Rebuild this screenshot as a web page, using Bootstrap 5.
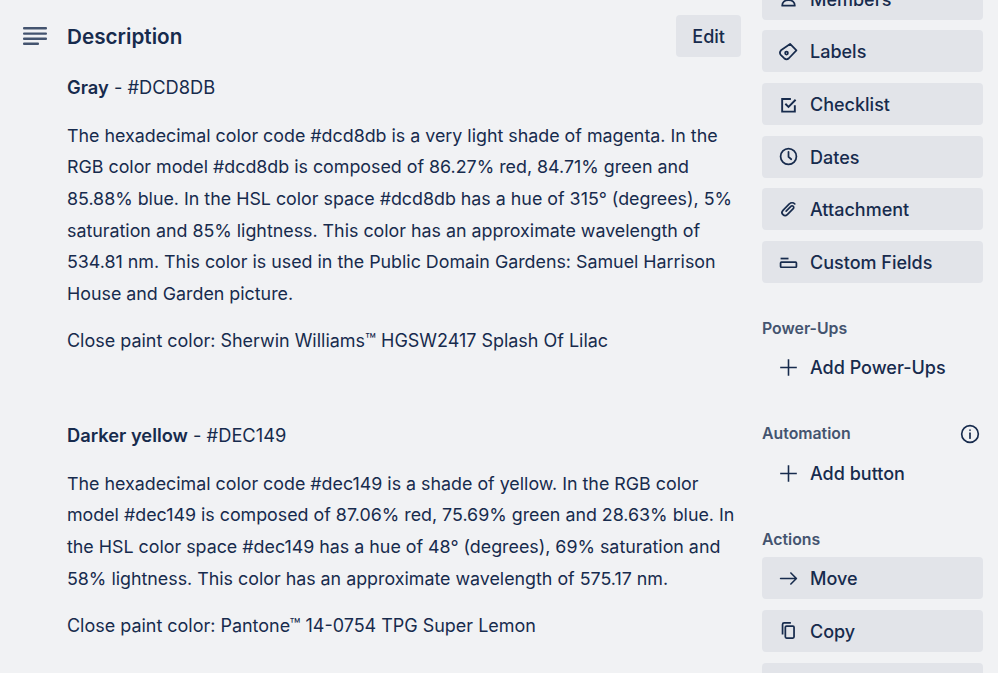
<!DOCTYPE html>
<html lang="en">
<head>
    <meta charset="UTF-8">
    <meta name="viewport" content="width=device-width, initial-scale=1.0">
    <title>Card Description</title>
    <link href="https://cdn.jsdelivr.net/npm/bootstrap@5.3.0/dist/css/bootstrap.min.css" rel="stylesheet">
    <style>
        html, body { height: 673px; overflow: hidden; }
        body { background: #f1f2f4; color: #172b4d; font-family: Inter, "Liberation Sans", sans-serif; font-size: 17.83px; line-height: 31.68px; }
        .page-wrap { padding-left: 23px; padding-right: 15px; gap: 21px; }
        .main-col { width: 718px; flex: none; padding-top: 15px; }
        .side-col { width: 221px; flex: none; margin-top: -22.3px; }
        .desc-icon { width: 25px; height: 20px; flex: none; margin-right: 19px; }
        .desc-title { font-size: 20.7px; font-weight: 600; line-height: 42px; margin: 0; position: relative; top: 1px; }
        .body-text { padding-left: 44px; }
        .body-text p { margin-bottom: 15.7px; }
        .body-text b { font-weight: 600; }
        .entry-title { font-size: 18.3px; }
        .paint-line { font-size: 17.97px; }
        .first-entry { margin-top: 15.3px; }
        .color-entry { margin-top: 63px; }
        .gray-btn { background: #e2e4e9; color: #172b4d; border: 0; border-radius: 4px; font-size: 18px; font-weight: 500; height: 42px; line-height: 40px; padding: 2px 16px 0; }
        .gray-btn:hover { background: #d5d8de; color: #172b4d; }
        .side-btn { width: 100%; text-align: left; padding: 2px 17px 0; margin-bottom: 10.7px; display: flex; align-items: center; white-space: nowrap; flex: none; }
        .plain-btn { background: transparent; }
        .side-btn svg { width: 19px; height: 19px; flex: none; margin-right: 12px; margin-top: -2px; }
        .side-label { color: #44546f; font-size: 15.84px; font-weight: 600; line-height: 21px; display: flex; justify-content: space-between; align-items: center; }
        .label-power { margin-top: 35px; margin-bottom: 7px; }
        .label-auto { margin-top: 35px; margin-bottom: 8px; }
        .label-actions { margin-top: 35px; margin-bottom: 7px; }
        .info-icon { width: 20px; height: 20px; margin-right: 3px; }
    </style>
</head>
<body>
<div class="d-flex page-wrap">
    <!-- Description -->
    <div class="main-col">
        <div class="d-flex align-items-center">
            <svg class="desc-icon" viewBox="0 0 25 20" fill="#44546f"><rect x="0" y="1" width="24" height="2.4" rx="1"/><rect x="0" y="6.4" width="24" height="2.4" rx="1"/><rect x="0" y="11.6" width="24" height="2.4" rx="1"/><rect x="0" y="16.6" width="16" height="2.4" rx="1"/></svg>
            <h2 class="desc-title flex-grow-1">Description</h2>
            <button type="button" class="btn gray-btn">Edit</button>
        </div>
        <div class="body-text">
            <p class="first-entry entry-title"><b>Gray</b> - #DCD8DB</p>
            <p>The hexadecimal color code #dcd8db is a very light shade of magenta. In the RGB color model #dcd8db is composed of 86.27% red, 84.71% green and 85.88% blue. In the HSL color space #dcd8db has a hue of 315° (degrees), 5% saturation and 85% lightness. This color has an approximate wavelength of 534.81 nm. This color is used in the Public Domain Gardens: Samuel Harrison House and Garden picture.</p>
            <p class="paint-line">Close paint color: Sherwin Williams™ HGSW2417 Splash Of Lilac</p>
            <p class="color-entry entry-title"><b>Darker yellow</b> - #DEC149</p>
            <p>The hexadecimal color code #dec149 is a shade of yellow. In the RGB color model #dec149 is composed of 87.06% red, 75.69% green and 28.63% blue. In the HSL color space #dec149 has a hue of 48° (degrees), 69% saturation and 58% lightness. This color has an approximate wavelength of 575.17 nm.</p>
            <p class="paint-line">Close paint color: Pantone™ 14-0754 TPG Super Lemon</p>
        </div>
    </div>

    <!-- Sidebar -->
    <div class="side-col">
        <button type="button" class="btn gray-btn side-btn"><svg viewBox="0 0 24 24" fill="none" stroke="#172b4d" stroke-width="2.2"><circle cx="12" cy="7" r="4.5"/><path d="M4 21c0-4 3-7 8-7s8 3 8 7z" stroke-linejoin="round"/></svg>Members</button>
        <button type="button" class="btn gray-btn side-btn"><svg viewBox="0 0 24 24" fill="none" stroke="#172b4d" stroke-width="2.2" stroke-linejoin="round"><path d="M14 2.500l8 8-9.500 10a4.500 4.500 0 0 1-6 0l-4-4a4.500 4.500 0 0 1 0-6z"/><circle cx="9.500" cy="14" r="1.800"/></svg>Labels</button>
        <button type="button" class="btn gray-btn side-btn"><svg viewBox="0 0 24 24" fill="none" stroke="#172b4d" stroke-width="2.4"><path d="M20 13v8H4V5h11"/><path d="M8 11l4 4 9-9"/></svg>Checklist</button>
        <button type="button" class="btn gray-btn side-btn"><svg viewBox="0 0 24 24" fill="none" stroke="#172b4d" stroke-width="2.2" stroke-linecap="round"><circle cx="12" cy="12" r="10"/><path d="M12 6v6.500l3.500 3"/></svg>Dates</button>
        <button type="button" class="btn gray-btn side-btn"><svg viewBox="0 0 24 24" fill="none" stroke="#172b4d" stroke-width="2.1" stroke-linecap="round" stroke-linejoin="round"><path d="M9 14l6-6a2 2 0 0 1 3 3l-7.500 7.500a3.800 3.800 0 0 1-5.500-5.500l8-8a4.800 4.800 0 0 1 7 0"/></svg>Attachment</button>
        <button type="button" class="btn gray-btn side-btn"><svg viewBox="0 0 24 24" fill="none" stroke="#172b4d" stroke-width="2.2"><path d="M2 7h10"/><rect x="2" y="11.500" width="20" height="6.500" rx="1"/></svg>Custom Fields</button>

        <div class="side-label label-power">Power-Ups</div>
        <button type="button" class="btn gray-btn plain-btn side-btn"><svg viewBox="0 0 24 24" fill="none" stroke="#172b4d" stroke-width="2"><path d="M12 1.500v21M1.500 12h21"/></svg>Add Power-Ups</button>

        <div class="side-label label-auto">Automation
            <svg class="info-icon" viewBox="0 0 24 24" fill="none" stroke="#172b4d" stroke-width="2" stroke-linecap="round"><circle cx="12" cy="12" r="10"/><path d="M12 11v6"/><path d="M12 7.400v.2"/></svg>
        </div>
        <button type="button" class="btn gray-btn plain-btn side-btn"><svg viewBox="0 0 24 24" fill="none" stroke="#172b4d" stroke-width="2"><path d="M12 1.500v21M1.500 12h21"/></svg>Add button</button>

        <div class="side-label label-actions">Actions</div>
        <button type="button" class="btn gray-btn side-btn"><svg viewBox="0 0 24 24" fill="none" stroke="#172b4d" stroke-width="2" stroke-linecap="round" stroke-linejoin="round"><path d="M2 12h20M15 5l7 7-7 7"/></svg>Move</button>
        <button type="button" class="btn gray-btn side-btn"><svg viewBox="0 0 24 24" fill="none" stroke="#172b4d" stroke-width="2.2" stroke-linejoin="round"><rect x="8" y="6.500" width="11" height="15" rx="1.500"/><path d="M4.500 17V4.500a2 2 0 0 1 2-2H15"/></svg>Copy</button>
        <button type="button" class="btn gray-btn side-btn"></button>
    </div>
</div>
</body>
</html>
